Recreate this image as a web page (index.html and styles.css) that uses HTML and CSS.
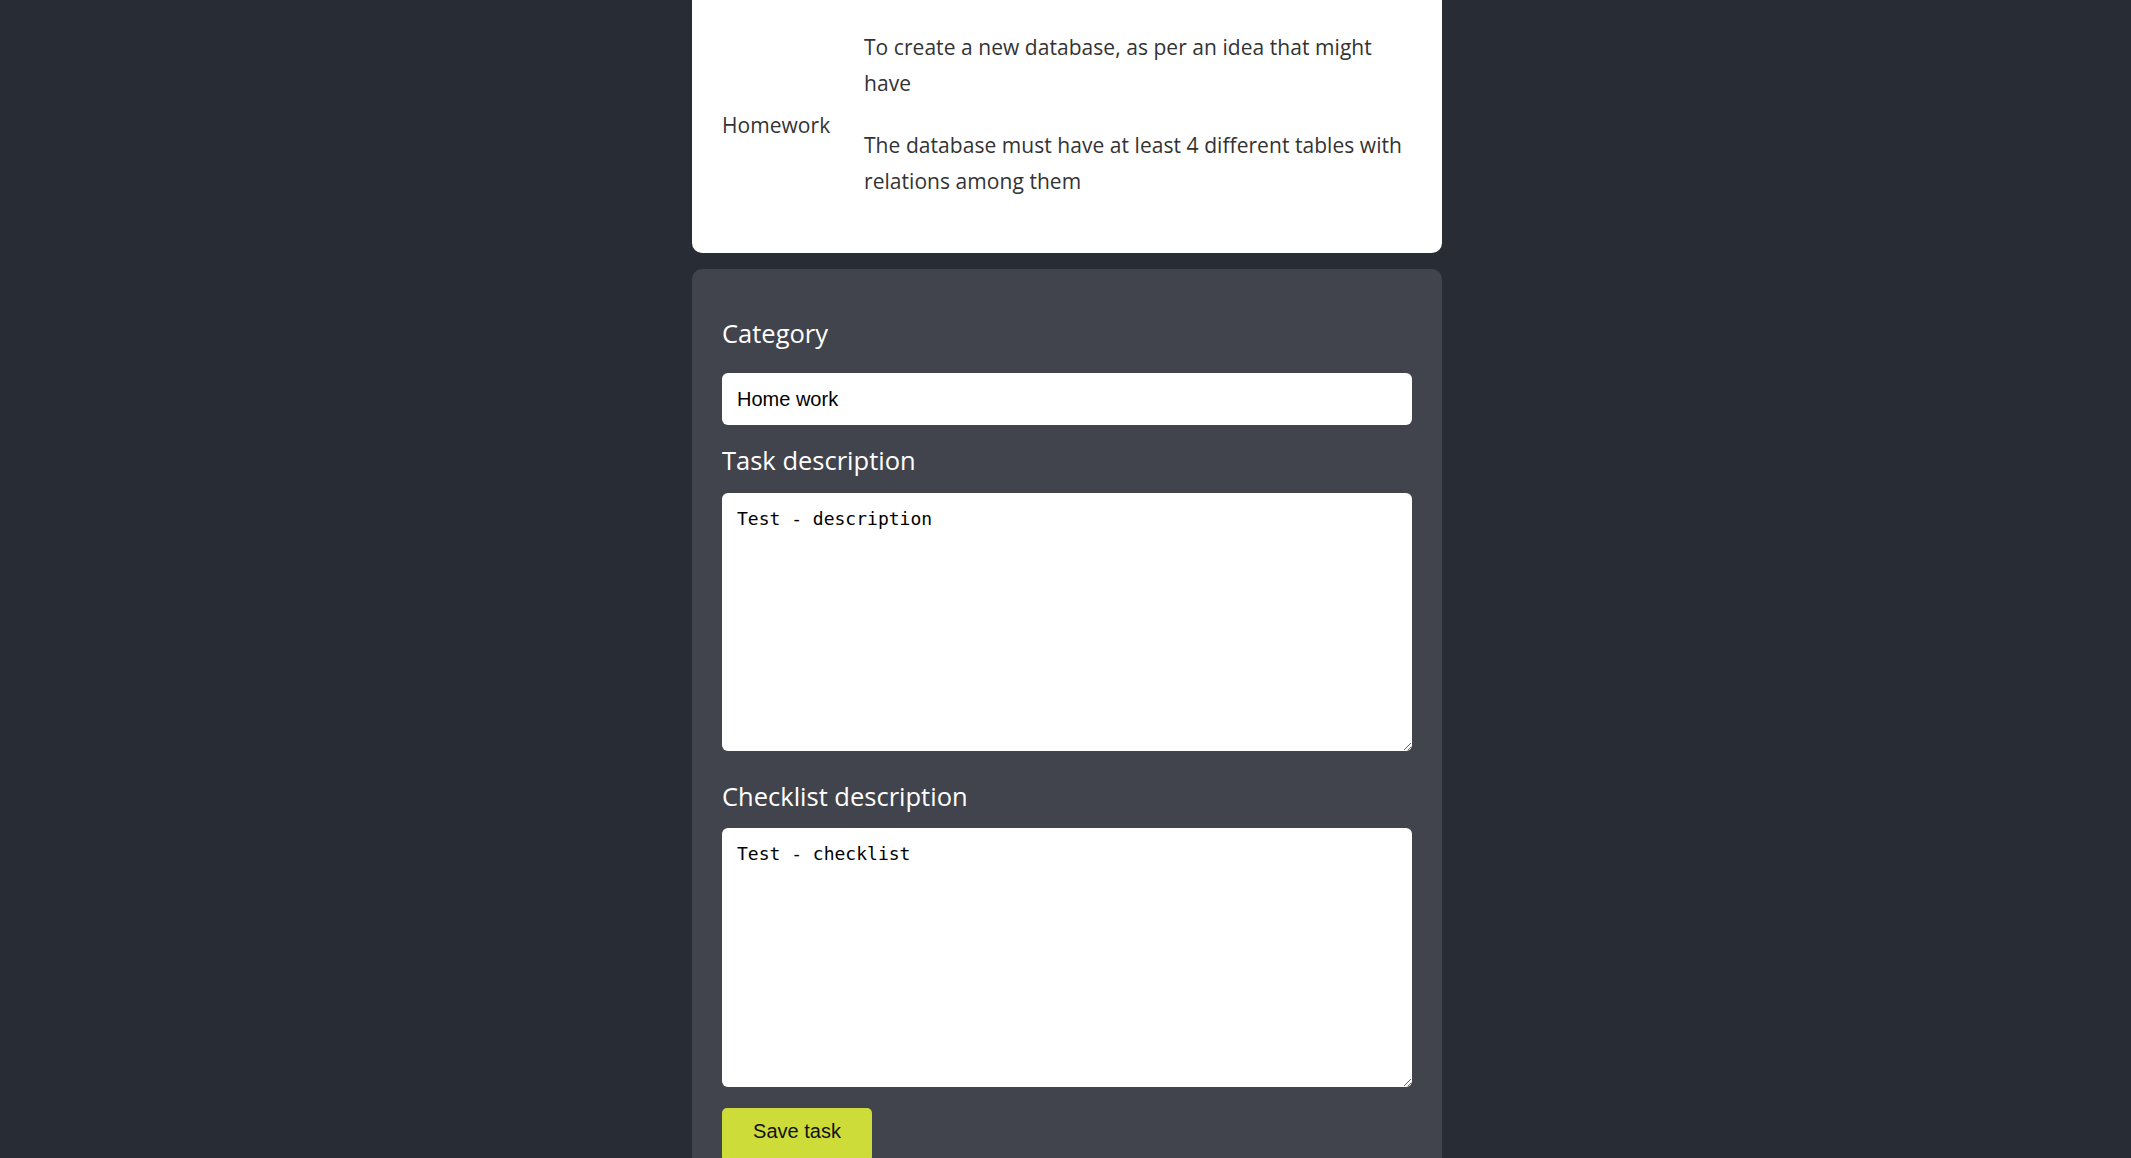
FILE: index.html
```html
<!DOCTYPE html>
<html lang="en">
<head>
<meta charset="utf-8">
<title>Task</title>
<link rel="stylesheet" href="styles.css">
</head>
<body>
<main class="page">
  <section class="task-card">
    <div class="task-category">Homework</div>
    <div class="task-desc">
      <p>To create a new database, as per an idea that might have</p>
      <p>The database must have at least 4 different tables with relations among them</p>
    </div>
  </section>

  <form class="form-card">
    <label class="form-label label-category" for="category">Category</label>
    <input class="form-input" id="category" type="text" value="Home work">

    <label class="form-label label-task" for="task">Task description</label>
    <textarea class="form-area area-task" id="task">Test - description</textarea>

    <label class="form-label label-check" for="check">Checklist description</label>
    <textarea class="form-area area-check" id="check">Test - checklist</textarea>

    <button class="save-btn" type="button">Save task</button>
  </form>
</main>
</body>
</html>
```

FILE: styles.css
```css
html, body {
  margin: 0;
  padding: 0;
}

body {
  background: #282c34;
  font-family: "Segoe UI", "Open Sans", sans-serif;
}

.page {
  width: 750px;
  margin: 0 auto;
  padding: 0 0 60px 3px;
}

.task-card {
  background: #ffffff;
  border-radius: 0 0 10px 10px;
  padding: 29px 30px 32px;
  display: grid;
  grid-template-columns: 142px 1fr;
  align-items: center;
  color: #333333;
  font-family: "Open Sans", sans-serif;
  font-size: 21px;
  letter-spacing: 0.05px;
  line-height: 36px;
}

.task-desc p {
  margin: 0 0 26px;
}

.task-desc p:last-child {
  margin-bottom: 22px;
}

.form-card {
  margin-top: 16px;
  background: #41444c;
  border-radius: 10px;
  padding: 49px 30px 60px;
  display: flex;
  flex-direction: column;
}

.form-label {
  color: #ffffff;
  font-family: "Open Sans", sans-serif;
  font-size: 25.5px;
  line-height: 30px;
}

.label-category { margin-bottom: 25px; }
.label-task { margin-bottom: 18px; }
.label-check { margin-bottom: 17px; }

.form-input {
  box-sizing: border-box;
  height: 52px;
  width: 100%;
  border: none;
  border-radius: 6px;
  padding: 0 15px;
  font-family: "Liberation Sans", Arial, sans-serif;
  font-size: 20px;
  color: #000;
  background: #fff;
  margin: 0 0 20px;
  outline: none;
}

.form-area {
  box-sizing: border-box;
  width: 100%;
  border: none;
  border-radius: 6px;
  padding: 15px;
  font-family: "DejaVu Sans Mono", "Liberation Mono", monospace;
  font-size: 18px;
  color: #000;
  background: #fff;
  outline: none;
  margin: 0;
}

.area-task {
  height: 258px;
  margin-bottom: 30px;
}

.area-check {
  height: 259px;
  margin-bottom: 21px;
}

.save-btn {
  align-self: flex-start;
  box-sizing: border-box;
  width: 150px;
  height: 54px;
  border: none;
  border-radius: 5px;
  background: #cddc39;
  color: #111;
  font-family: "Liberation Sans", Arial, sans-serif;
  font-size: 20px;
  padding: 0 0 8px;
}
```
